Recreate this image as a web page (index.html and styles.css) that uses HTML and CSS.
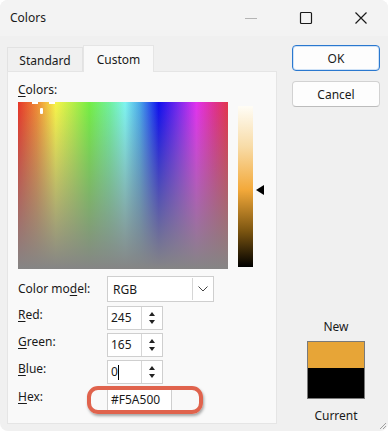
FILE: index.html
```html
<!DOCTYPE html>
<html lang="en">
<head>
    <meta charset="UTF-8">
    <meta name="viewport" content="width=device-width, initial-scale=1.0">
    <title>Colors</title>
    <link rel="stylesheet" href="styles.css">
</head>
<body>

    <div class="window">
        <div class="titlebar">
            <span class="title">Colors</span>
            <div class="controls">
                <span class="ctl">
                    <svg width="14" height="14" viewBox="0 0 14 14"><path d="M1 7.5h12" stroke="#b4b4b4" stroke-width="1"/></svg>
                </span>
                <span class="ctl">
                    <svg width="14" height="14" viewBox="0 0 14 14"><rect x="1.5" y="1.5" width="11" height="11" rx="1" fill="none" stroke="#1a1a1a" stroke-width="1.2"/></svg>
                </span>
                <span class="ctl">
                    <svg width="14" height="14" viewBox="0 0 14 14"><path d="M1.5 1.5l11 11M12.5 1.5l-11 11" stroke="#1a1a1a" stroke-width="1.2"/></svg>
                </span>
            </div>
        </div>

        <div class="content">
            <div class="left">
                <div class="tabs">
                    <div class="tab">Standard</div>
                    <div class="tab active">Custom</div>
                </div>

                <div class="panel">
                    <div class="label-colors"><u>C</u>olors:</div>

                    <div class="picker">
                        <div class="spectrum">
                            <span class="cross c-top-l"></span>
                            <span class="cross c-top-r"></span>
                            <span class="cross c-mid"></span>
                        </div>
                        <div class="lum"></div>
                        <div class="arrow"></div>
                    </div>

                    <div class="form">
                        <div class="row row-select">
                            <span class="lbl">Color mo<u>d</u>el:</span>
                            <div class="select">
                                <span class="select-text">RGB</span>
                                <span class="select-btn">
                                    <svg width="10" height="6" viewBox="0 0 10 6"><path d="M0.5 0.5l4.5 4.5 4.5-4.5" fill="none" stroke="#444" stroke-width="1"/></svg>
                                </span>
                            </div>
                        </div>
                        <div class="row row-spin first">
                            <span class="lbl"><u>R</u>ed:</span>
                            <div class="spin">
                                <span class="spin-text">245</span>
                                <span class="spin-btns"><span class="up"></span><span class="down"></span></span>
                            </div>
                        </div>
                        <div class="row row-spin">
                            <span class="lbl"><u>G</u>reen:</span>
                            <div class="spin">
                                <span class="spin-text">165</span>
                                <span class="spin-btns"><span class="up"></span><span class="down"></span></span>
                            </div>
                        </div>
                        <div class="row row-spin">
                            <span class="lbl"><u>B</u>lue:</span>
                            <div class="spin">
                                <span class="spin-text">0<span class="caret"></span></span>
                                <span class="spin-btns"><span class="up"></span><span class="down"></span></span>
                            </div>
                        </div>
                        <div class="row row-spin hex-row">
                            <span class="lbl"><u>H</u>ex:</span>
                            <div class="hex">#F5A500</div>
                            <div class="highlight"></div>
                        </div>
                    </div>
                </div>
            </div>

            <div class="right">
                <button class="btn btn-ok">OK</button>
                <button class="btn">Cancel</button>

                <div class="preview">
                    <div class="pv-label">New</div>
                    <div class="swatch">
                        <div class="sw-new"></div>
                        <div class="sw-cur"></div>
                    </div>
                    <div class="pv-label">Current</div>
                </div>
            </div>
        </div>

        <svg class="grip" width="8" height="8" viewBox="0 0 8 8"><path d="M7 1L1 7M7 4L4 7" stroke="#a0a0a0" stroke-width="1"/></svg>
    </div>

</body>
</html>
```

FILE: styles.css
```css
html, body {
    margin: 0;
    padding: 0;
    background: #ffffff;
}

body {
    font-family: "Noto Sans", "Open Sans", sans-serif;
    font-size: 12px;
    color: #1a1a1a;
}

u {
    text-decoration-thickness: 1px;
    text-underline-offset: 2px;
}

/* Window frame */
.window {
    position: relative;
    width: 388px;
    height: 431px;
    background: #f0f0f0;
    border-radius: 8px;
    overflow: hidden;
    box-sizing: border-box;
}

.titlebar {
    height: 36px;
    display: flex;
    align-items: center;
    background: #f3f3f3;
}

.title {
    padding-left: 10px;
    margin-top: -1px;
}

.controls {
    margin-left: auto;
    display: flex;
}

.ctl {
    width: 55px;
    height: 36px;
    display: flex;
    align-items: center;
    justify-content: center;
}

.ctl svg {
    margin-top: -1px;
}

/* Main content */
.content {
    display: flex;
    padding-top: 9px;
}

.left {
    margin-left: 7px;
    width: 270px;
}

/* Tabs */
.tabs {
    display: flex;
    align-items: flex-end;
    height: 26px;
}

.tab {
    height: 24px;
    width: 76px;
    box-sizing: border-box;
    border: 1px solid #e2e2e2;
    border-bottom: none;
    background: #f0f0f0;
    display: flex;
    align-items: center;
    justify-content: center;
    padding-top: 1px;
}

.tab.active {
    height: 27px;
    width: 71px;
    background: #f9f9f9;
    border-color: #e5e5e5;
    margin-bottom: -1px;
    position: relative;
    z-index: 1;
    padding-top: 0;
}

.panel {
    height: 353px;
    box-sizing: border-box;
    background: #f9f9f9;
    border: 1px solid #e5e5e5;
    padding: 10px 0 0 10px;
}

.label-colors {
    line-height: 16px;
}

/* Spectrum and luminance */
.picker {
    display: flex;
    align-items: flex-start;
    margin-top: 4px;
    height: 167px;
}

.spectrum {
    position: relative;
    width: 210px;
    height: 167px;
    background:
        linear-gradient(to bottom, rgba(133, 133, 133, 0) 0%, rgba(133, 133, 133, 1) 100%),
        linear-gradient(to right, #e6362a 0%, #ef8a34 9%, #f7f44a 18%, #b8ee48 26%, #74ee44 34%, #70f0a0 44%, #7ef4f0 51%, #4aa8e8 58%, #1010ee 67%, #7428ee 76%, #e232ee 85%, #e0308a 94%, #e2354a 100%);
}

.cross {
    position: absolute;
    background: #ffffff;
}

.c-top-l {
    left: 14px;
    top: 0;
    width: 6px;
    height: 2px;
}

.c-top-r {
    left: 31px;
    top: 0;
    width: 6px;
    height: 2px;
}

.c-mid {
    left: 22px;
    top: 6px;
    width: 3px;
    height: 6px;
    border-radius: 1px;
}

.lum {
    width: 15px;
    height: 161px;
    margin-top: 4px;
    margin-left: 10px;
    background: linear-gradient(to bottom, #fffdf6 0%, #f8dca8 25%, #f3a93a 52%, #7a5410 78%, #000000 100%);
}

.arrow {
    width: 0;
    height: 0;
    margin-top: 83px;
    margin-left: 3px;
    border-top: 5px solid transparent;
    border-bottom: 5px solid transparent;
    border-right: 8px solid #000000;
}

/* Form rows */
.form {
    margin-top: 7px;
}

.row {
    display: flex;
}

.row-select {
    height: 26px;
    align-items: center;
}

.row-spin {
    height: 24px;
    margin-top: 3px;
    align-items: flex-start;
}

.row-spin.first {
    margin-top: 4px;
}

.hex-row {
    position: relative;
    margin-top: 4px;
}

.lbl {
    width: 89px;
    line-height: 16px;
}

.row-spin .lbl {
    padding-top: 1px;
}

.select {
    width: 107px;
    height: 26px;
    box-sizing: border-box;
    background: #ffffff;
    border: 1px solid #cfcfcf;
    display: flex;
    align-items: center;
}

.select-text {
    padding-left: 5px;
    flex: 1;
}

.select-btn {
    width: 20px;
    height: 22px;
    box-sizing: border-box;
    border-left: 1px solid #d6d6d6;
    display: flex;
    align-items: center;
    justify-content: center;
    margin-right: 1px;
}

.spin {
    width: 56px;
    height: 24px;
    box-sizing: border-box;
    background: #ffffff;
    border: 1px solid #cfcfcf;
    display: flex;
}

.spin-text {
    flex: 1;
    padding-left: 3px;
    line-height: 22px;
    position: relative;
}

.caret {
    position: absolute;
    left: 10px;
    top: 4px;
    width: 1px;
    height: 15px;
    background: #000000;
}

.spin-btns {
    width: 20px;
    border-left: 1px solid #d6d6d6;
    display: flex;
    flex-direction: column;
    align-items: center;
    justify-content: center;
    gap: 4px;
}

.up {
    width: 0;
    height: 0;
    border-left: 3.5px solid transparent;
    border-right: 3.5px solid transparent;
    border-bottom: 4px solid #222222;
}

.down {
    width: 0;
    height: 0;
    border-left: 3.5px solid transparent;
    border-right: 3.5px solid transparent;
    border-top: 4px solid #222222;
}

.hex {
    width: 65px;
    height: 24px;
    box-sizing: border-box;
    background: #ffffff;
    border: 1px solid #cfcfcf;
    padding-left: 3px;
    line-height: 22px;
}

.highlight {
    position: absolute;
    left: 69px;
    top: -2px;
    width: 116px;
    height: 28px;
    box-sizing: border-box;
    border: 4px solid #e0634d;
    border-radius: 11px;
    box-shadow: 1px 2px 3px rgba(0, 0, 0, 0.35);
}

/* Right column */
.right {
    margin-left: 15px;
    width: 88px;
    display: flex;
    flex-direction: column;
}

.btn {
    width: 88px;
    height: 26px;
    font-family: inherit;
    font-size: 12px;
    color: #1a1a1a;
    background: #fdfdfd;
    border: 1px solid #d2d2d2;
    border-bottom-color: #bcbcbc;
    border-radius: 4px;
    padding: 0;
    margin-bottom: 10px;
}

.btn-ok {
    border: 1px solid #2a78cf;
    box-shadow: inset 0 0 0 1px #cfe2f7;
}

.preview {
    margin-top: 202px;
    display: flex;
    flex-direction: column;
    align-items: center;
}

.pv-label {
    line-height: 16px;
}

.swatch {
    width: 58px;
    height: 58px;
    box-sizing: border-box;
    border: 1px solid #7a7a7a;
    margin: 6px 0 9px;
    display: flex;
    flex-direction: column;
}

.sw-new {
    height: 26px;
    background: #e7a537;
}

.sw-cur {
    flex: 1;
    background: #000000;
}

.grip {
    position: absolute;
    right: 1px;
    bottom: 1px;
}
```
